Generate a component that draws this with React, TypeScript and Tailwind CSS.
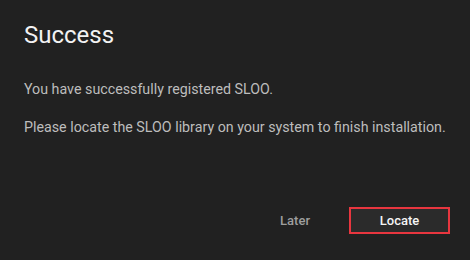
const App = () => {
  return (
    <div
      className="w-[470px] h-[260px] bg-[#212121] flex flex-col px-6 pt-[19px] pb-[26px]"
      style={{ fontFamily: "Roboto, 'Noto Sans', sans-serif" }}
    >
      <h1 className="text-[24px] leading-[32px] text-[#f2f2f2] font-normal">Success</h1>
      <div className="mt-[28px] space-y-[16px] text-[14.25px] leading-[21.5px] text-[#bdbdbd] whitespace-nowrap">
        <p>You have successfully registered SLOO.</p>
        <p>Please locate the SLOO library on your system to finish installation.</p>
      </div>
      <div className="mt-auto flex justify-end items-center gap-[26px] -mr-1">
        <button className="h-[27px] px-[13px] text-[13px] font-medium text-[#9e9e9e]">Later</button>
        <button className="h-[27px] w-[101px] border-2 border-[#e8363f] bg-[#2b2b2b] text-[13px] font-medium text-[#f5f5f5]">
          Locate
        </button>
      </div>
    </div>
  );
};

export default App;
